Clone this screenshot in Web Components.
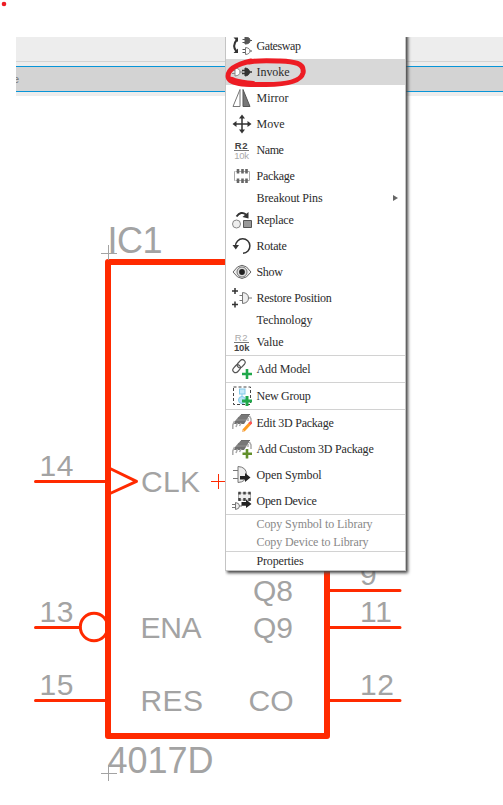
<!DOCTYPE html>
<html lang="en"><head><meta charset="utf-8"><title>Schematic editor</title>
<style>html,body{margin:0;background:#fff;overflow:hidden}</style></head>
<body>
<schematic-editor></schematic-editor>
<script>
const svg = (body) => `<svg viewBox="0 0 20 20" width="20" height="20" fill="none" stroke="#333" stroke-width="1">${body}</svg>`;
const pack3d = `<path d="M6 4.500 9.500 1H18L14 8H3z" fill="#858585" stroke="none"/><path d="M9 1.500H18M8 3H17M6 5H16" stroke="#6b6b6b"/><path d="M3 8H14L12 11H2z" fill="#707070" stroke="none"/><path d="M2.500 8 .8 12V16M5.500 10 4 14M9 10 7.500 13M17.500 3 19 6V10M16 5V8" stroke="#aaa" stroke-width="1.500"/>`;
const icons = {
  gateswap: svg(`<path d="M5 3.500Q-.5 10 4.500 15.500" stroke-width="2"/><path d="M1.500 1.500H6V6zM1.500 17H6V12.500z" fill="#333" stroke="none"/><path d="M13 1Q18 1 18 4.500T13 8z" fill="#555" stroke="#555"/><path d="M10.500 3.500H13M10.500 6.500H13M18 4.500H20M10.500 13.500H13M10.500 16.500H13M18 15H20" stroke="#555"/><path d="M13.500 11.500Q18 12 18 15T13.500 18.500z" stroke="#777"/>`),
  invoke: svg(`<path d="M3 6Q8 6.500 8 10T3 14zM0 8.500H3M0 11.500H3M8 10H11" stroke="#888" fill="#fff"/><path d="M13 6Q17.500 6.500 17.500 10T13 14z" fill="#333"/><path d="M10 8.500H13M10 11.500H13M17 10H20" stroke-width="1.500"/>`),
  mirror: svg(`<path d="M8 1.500V18.500H1z" stroke="#777"/><path d="M11 1.500V18.500H18z" fill="#777" stroke="#555"/>`),
  move: svg(`<path d="M10 3V17M3 10H17" stroke-width="1.500"/><path d="M10 .5 13 4.500H7zM10 19.500 13 15.500H7zM.5 10 4.500 7V13zM19.500 10 15.500 7V13z" fill="#333" stroke="none"/>`),
  name: `<span class="v"><b>R2</b><i class="lo">10k</i></span>`,
  value: `<span class="v"><i>R2</i><b class="lo">10k</b></span>`,
  package: svg(`<path d="M3.500 5.500H2.500V14.500H3.500M16.500 5.500H17.500V14.500H16.500M4 5.500H17M4 14.500H17" stroke="#aaa"/><path d="M6 3V7.500M10.500 3V7.500M14.500 3V7.500M6 12.500V17M10.500 12.500V17M14.500 12.500V17" stroke="#666" stroke-width="2.600"/>`),
  replace: svg(`<circle cx="4.500" cy="14" r="4" fill="#eee" stroke="#888"/><path d="M11.500 10.500H19.500V17.500H11.500z" fill="#999" stroke="#555"/><path d="M4.500 6.500Q9 .5 14 4.500" stroke-width="2"/><path d="M16.500 2V8.500L10.500 7z" fill="#333" stroke="none"/>`),
  rotate: svg(`<path d="M3.500 10A7.200 7.200 0 1 1 11 17.200" stroke-width="1.500"/><path d="M.5 9H7L3.800 13.500z" fill="#333" stroke="none"/>`),
  show: svg(`<path d="M1 10Q10-3.500 19 10Q10 23 1 10z" fill="#eee" stroke="#666"/><circle cx="10" cy="10" r="5" fill="#ddd" stroke="#777"/><circle cx="10" cy="10" r="2.900" fill="#222" stroke="none"/>`),
  restore: svg(`<path d="M3 0V6M0 3H6M3 13.500V19.500M0 16.500H6" stroke-width="1.500"/><path d="M10.500 4.500Q16.500 5 16.500 10T10.500 15.500zM7.500 7.500H10.500M7.500 12.500H10.500M16.500 10H20" fill="#eee" stroke="#777"/>`),
  model: svg(`<g stroke="#555" stroke-width="1.200" transform="rotate(-48 7 7.500)"><rect x="-.5" y="4.500" width="8.500" height="5.500" rx="2.700"/><rect x="6" y="4.500" width="9" height="5.500" rx="2.700"/></g><path d="M15 10V20M10 15H20" stroke="#20a84b" stroke-width="2.600"/>`),
  group: svg(`<rect x="1.500" y="1" width="17" height="17.500" stroke="#444" stroke-dasharray="3 2"/><rect x="7.500" y="3" width="5.500" height="5" fill="#c7eafa" stroke="#85c9e8"/><path d="M10 8V11" stroke="#85c9e8"/><circle cx="10" cy="14" r="3.500" fill="#b7e3f7" stroke="#85c9e8"/><path d="M15 10V20M10 15H20" stroke="#20a84b" stroke-width="3"/>`),
  edit: svg(pack3d + `<path d="M11.500 17.500 18 10.500" stroke="#ff9d22" stroke-width="3"/><path d="M17.500 11 19.500 9" stroke="#f55" stroke-width="3"/><path d="M10 19 10.500 16.500 12.500 18.500z" fill="#eeb779" stroke="none"/>`),
  custom: svg(pack3d + `<path d="M15 10V19.500M10.500 14.700H20" stroke="#62902c" stroke-width="2.600"/>`),
  symbol: svg(`<path d="M6 1.500Q14.500 2 14.500 9.500T6 17.500zM1 5.500H6M1 13.500H6" fill="#eee" stroke="#777"/><path d="M8 11H13V8L18.500 12.500 13 17V14.500H8z" fill="#222" stroke="none"/>`),
  device: svg(`<path d="M6.500 2V9H18.500V2z" fill="#eee" stroke="#aaa"/><path d="M7.500 .8V3.500M12.500 .8V3.500M17.500 .8V3.500M7.500 7V10M12.500 7V10M17.500 7V10" stroke="#444" stroke-width="2.500"/><path d="M3.500 11.500Q7.500 12 7.500 15T3.500 18.500zM0 13.500H3.500M0 16.500H3.500M7.500 15H10" fill="#eee" stroke="#777"/><path d="M9.500 11H14V8.500L19.500 13 14 17V14.800H9.500z" fill="#222" stroke="none"/>`)
};

customElements.define('tool-bar', class extends HTMLElement {
  constructor() {
    super();
    this.attachShadow({mode: 'open'}).innerHTML = `<style>
      :host{display:block;height:59px;background:#ededed;overflow:hidden}
      .top{height:24px;border-bottom:1px solid #d4d4d4;margin-bottom:4px}
      .field{height:24px;border:solid #0795d8;border-width:1px 0;background:#d3d3d3;font:11px/24px "Liberation Sans",sans-serif;color:#777;text-indent:-3px}
    </style><div class="top"></div><div class="field"><slot></slot></div>`;
  }
});

customElements.define('chip-drawing', class extends HTMLElement {
  constructor() {
    super();
    const t = (x, y, w, s, big) => `<text x="${x}" y="${y}" textLength="${w}" font-size="${big ? 36 : 30}">${s}</text>`;
    this.attachShadow({mode: 'open'}).innerHTML = `<style>
      :host{display:block}svg{display:block}text{font-family:"Liberation Sans",sans-serif;fill:#a3a3a3}
    </style><svg width="503" height="805" fill="none" stroke="#ff2a00" stroke-width="3">
      <circle cx="4" cy="4" r="2.300" fill="#ed1c24" stroke="none"/>
      <rect x="108" y="262" width="219" height="474" stroke-width="6" stroke-linejoin="round"/>
      <g stroke-linecap="round"><path d="M35.500 481.500H106M35.500 627.500H80M35.500 700.500H106M329 590.500H400M329 627.500H400M329 700.500H400"/></g>
      <path d="M110 468.500 136.500 481.300 110 493.500" stroke-linejoin="round"/>
      <circle cx="94" cy="627" r="13.700"/>
      <path d="M211 481.500H226M218.500 474V489" stroke-width="1"/>
      <path d="M101 253.500H117M108.500 245V260M101 773.500H117M108.500 765V781" stroke="#a3a3a3" stroke-width="1"/>
      <g stroke="none">${t(107.5,253,55,'IC1',1)}${t(107.500,773,106,'4017D',1)}
      ${t(39.5,476,34,'14')}${t(39.5,622,34,'13')}${t(39.5,695,34,'15')}
      ${t(141,492,59,'CLK')}${t(140.5,638,61,'ENA')}${t(140.5,711,62.5,'RES')}
      ${t(253,601,40,'Q8')}${t(253,638,40,'Q9')}${t(248.5,711,45,'CO')}
      ${t(360,585,17,'9')}${t(360,622,32,'11')}${t(360,695,34,'12')}</g>
    </svg>`;
  }
});

customElements.define('menu-item', class extends HTMLElement {
  connectedCallback() {
    const icon = this.getAttribute('icon');
    this.attachShadow({mode: 'open'}).innerHTML = `<style>
      :host{display:flex;align-items:center;height:18px;flex:none;padding:0 7px 0 6px;font:12px/16px "Liberation Serif",serif;color:#2b2b2b;white-space:nowrap}
      :host([icon]){height:26px}:host([active]){background:#d8d8d8}:host([disabled]){color:#888}
      .icon{width:20px;height:20px;margin-right:4.500px;flex:none}svg{display:block}
      .v{display:block;width:15px;margin:1px 0 0 2px;font:9.500px/9px "Liberation Sans",sans-serif;text-align:center}
      .v b,.v i{display:block;font-style:normal}.v i{color:#aaa}.v b{color:#444}
      .v :not(.lo){letter-spacing:.7px}
      .v .lo{border-top:1px solid #777;line-height:10px;letter-spacing:-.2px}
      .arrow{margin-left:auto;border:solid transparent;border-width:3px 0 3px 5px;border-left-color:#666}
    </style><span class="icon">${icons[icon] || ''}</span><span class="label"><slot></slot></span>${this.hasAttribute('submenu') ? '<span class="arrow"></span>' : ''}`;
    const label = this.shadowRoot.querySelector('.label');
    const spare = +this.getAttribute('fit') - label.getBoundingClientRect().width;
    label.style.letterSpacing = spare / this.textContent.length + 'px';
  }
});

customElements.define('menu-separator', class extends HTMLElement {
  constructor() {
    super();
    this.attachShadow({mode: 'open'}).innerHTML = `<style>:host{display:block;height:1px;flex:none;background:#d2d2d2}</style>`;
  }
});

customElements.define('context-menu', class extends HTMLElement {
  constructor() {
    super();
    this.attachShadow({mode: 'open'}).innerHTML = `<style>
      :host{display:block;overflow:hidden;width:190px;height:543px}
      .panel{display:flex;flex-direction:column;justify-content:flex-end;box-sizing:border-box;width:181px;height:538px;margin-top:-4px;border:1px solid #c4c4c4;background:#fff;box-shadow:2px 2px 3px 0 #444}
    </style><div class="panel"><slot></slot></div>`;
  }
});

customElements.define('schematic-editor', class extends HTMLElement {
  constructor() {
    super();
    const rows = [['Gateswap',44,'gateswap'],['Invoke',33,'invoke','active'],['Mirror',32,'mirror'],['Move',28,'move'],['Name',27,'name'],['Package',38,'package'],['Breakout Pins',66,'','submenu'],['Replace',37,'replace'],['Rotate',30,'rotate'],['Show',26,'show'],['Restore Position',75,'restore'],['Technology',56,''],['Value',27,'value'],0,['Add Model',54,'model'],0,['New Group',54,'group'],0,['Edit 3D Package',77,'edit'],['Add Custom 3D Package',117,'custom'],['Open Symbol',65,'symbol'],['Open Device',60,'device'],0,['Copy Symbol to Library',116,'','disabled'],['Copy Device to Library',112,'','disabled'],0,['Properties',47,'']];
    this.attachShadow({mode: 'open'}).innerHTML = `<style>
      :host{display:block;position:relative;width:503px;height:805px;overflow:hidden;background:#fff}
      tool-bar{position:absolute;left:16px;right:0;top:37px}
      context-menu{position:absolute;left:225px;top:37px}
      .mark{position:absolute;left:224px;top:54px}
    </style><chip-drawing></chip-drawing><tool-bar>e</tool-bar>
    <context-menu>${rows.map(r => r ? `<menu-item fit="${r[1]}"${r[2] ? ` icon="${r[2]}"` : ''} ${r[3] || ''}>${r[0]}</menu-item>` : '<menu-separator></menu-separator>').join('')}</context-menu>
    <svg class="mark" width="84" height="36" fill="none" stroke="#ed1c24" stroke-width="5" stroke-linecap="round"><path d="M27 7C14 10 4 15 4 22C4 31 24 30.500 42 30.500C65 30.500 77 27 79 19C81 9 70 7.500 56 7C43 6.500 33 6 25 8"/><path d="M8 26C14 29 22 29 29 30" stroke-width="6"/></svg>`;
  }
});
</script>
</body></html>
